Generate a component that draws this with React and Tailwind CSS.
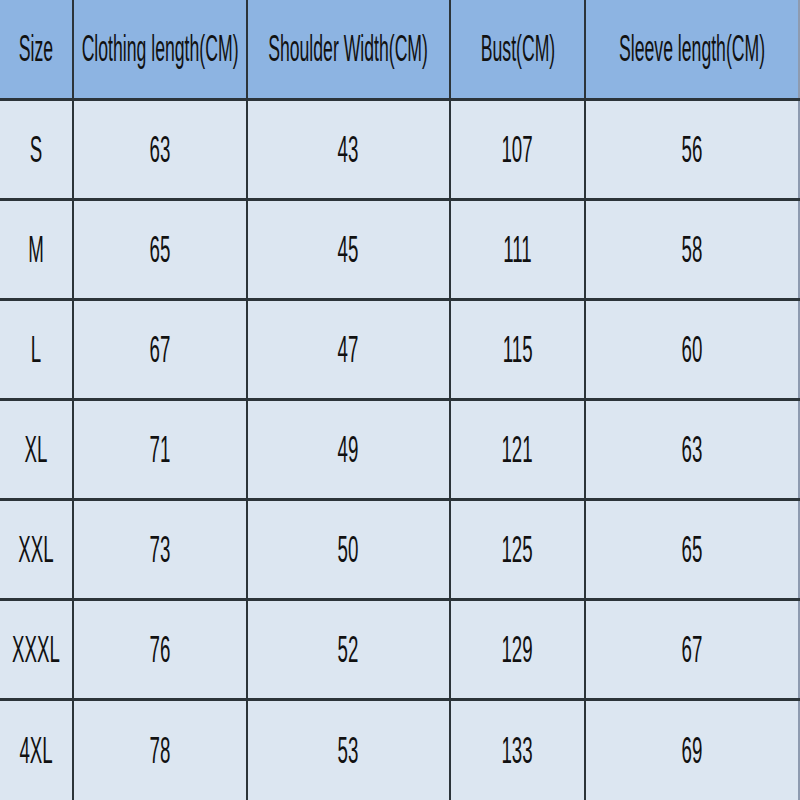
import React from 'react';

const HEADERS = ['Size', 'Clothing length(CM)', 'Shoulder Width(CM)', 'Bust(CM)', 'Sleeve length(CM)'];

const ROWS = [
  ['S', '63', '43', '107', '56'],
  ['M', '65', '45', '111', '58'],
  ['L', '67', '47', '115', '60'],
  ['XL', '71', '49', '121', '63'],
  ['XXL', '73', '50', '125', '65'],
  ['XXXL', '76', '52', '129', '67'],
  ['4XL', '78', '53', '133', '69'],
];

const COLS = ['w-[74px]', 'w-[174px]', 'w-[203px]', 'w-[135px]', 'flex-1'];

const Cell = ({ text, col, last, head }) => (
  <div
    className={`${COLS[col]} h-full flex items-center justify-center overflow-hidden ${
      last ? 'border-r-2 border-[#8e9bb0]' : 'border-r-2 border-[#2c3439]'
    }`}
  >
    <span
      className={`inline-block whitespace-nowrap text-[36px] leading-none text-[#111] ${
        head ? 'scale-x-[0.49]' : 'scale-x-[0.52]'
      }`}
    >
      {text}
    </span>
  </div>
);

const App = () => {
  return (
    <div className="w-[800px] h-[800px] overflow-hidden bg-[#dce6f1]" style={{ fontFamily: '"Liberation Sans", Arial, sans-serif' }}>
      {/* header */}
      <div className="flex h-[101px] bg-[#8db4e2] border-b-[3px] border-[#2c3439]">
        {HEADERS.map((h, i) => (
          <Cell key={h} text={h} col={i} last={i === 4} head />
        ))}
      </div>

      {ROWS.map((row, r) => (
        <div
          key={row[0]}
          className={`flex h-[100px] bg-[#dce6f1] ${r < ROWS.length - 1 ? 'border-b-[3px] border-[#2c3439]' : ''}`}
        >
          {row.map((v, i) => (
            <Cell key={i} text={v} col={i} last={i === 4} />
          ))}
        </div>
      ))}
    </div>
  );
};

export default App;
